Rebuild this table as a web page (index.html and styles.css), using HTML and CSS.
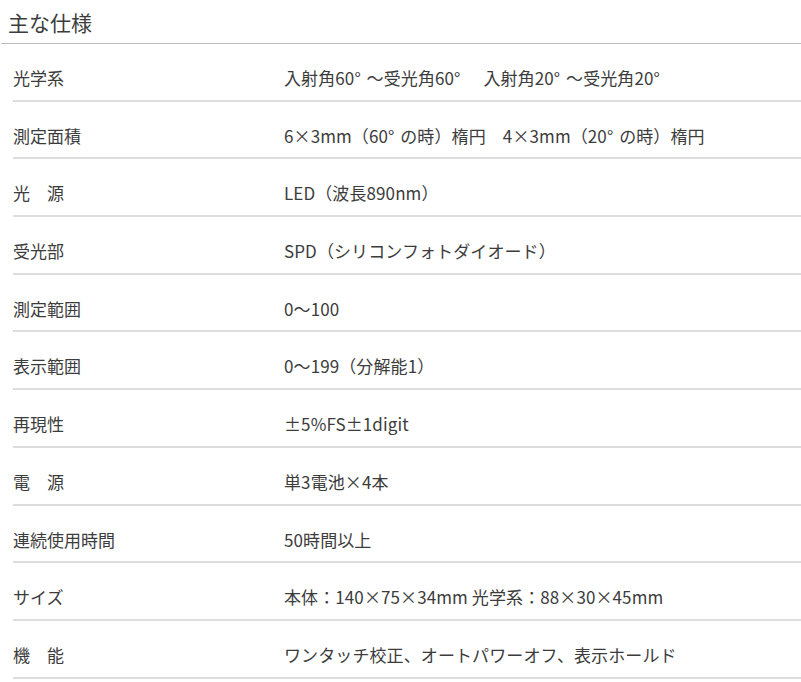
FILE: index.html
```html
<!DOCTYPE html>
<html lang="ja">
<head>
<meta charset="utf-8">
<link rel="stylesheet" href="styles.css">
</head>
<body>
<h2 class="title">主な仕様</h2>
<dl class="specs">
  <div class="row"><dt>光学系</dt><dd>入射角60<span class="deg">°</span>～受光角60<span class="deg">°</span>　入射角20<span class="deg">°</span>～受光角20<span class="deg">°</span></dd></div>
  <div class="row"><dt>測定面積</dt><dd>6×3mm（60<span class="deg">°</span>の時）楕円　4×3mm（20<span class="deg">°</span>の時）楕円</dd></div>
  <div class="row"><dt>光　源</dt><dd>LED（波長890nm）</dd></div>
  <div class="row"><dt>受光部</dt><dd>SPD（シリコンフォトダイオード）</dd></div>
  <div class="row"><dt>測定範囲</dt><dd>0～100</dd></div>
  <div class="row"><dt>表示範囲</dt><dd>0～199（分解能1）</dd></div>
  <div class="row"><dt>再現性</dt><dd>±5%FS±1digit</dd></div>
  <div class="row"><dt>電　源</dt><dd>単3電池×4本</dd></div>
  <div class="row"><dt>連続使用時間</dt><dd>50時間以上</dd></div>
  <div class="row"><dt>サイズ</dt><dd>本体：140×75×34mm 光学系：88×30×45mm</dd></div>
  <div class="row"><dt>機　能</dt><dd>ワンタッチ校正、オートパワーオフ、表示ホールド</dd></div>
</dl>
</body>
</html>
```
FILE: styles.css
```css
html, body {
  margin: 0;
  padding: 0;
  background: #fff;
}
body {
  font-family: "Noto Sans CJK JP", "Noto Sans", sans-serif;
  color: #3c3c3c;
}
.title {
  margin: 0 0 0 1px;
  padding: 8px 0 0 7px;
  font-size: 21px;
  font-weight: 400;
  line-height: 28px;
  border-bottom: 1px solid #bbb;
  box-sizing: border-box;
  height: 44px;
}
.specs {
  margin: 0 0 0 13px;
  padding: 0;
}
.row {
  display: flex;
  padding: 24px 0 11.7px;
  border-bottom: 2px solid #ddd;
  line-height: 20px;
  font-size: 17px;
}
.row dt {
  width: 271px;
  flex: none;
}
.row dd {
  margin: 0;
  letter-spacing: 0.1px;
}
.deg {
  display: inline-block;
  width: 0.72em;
}
```
